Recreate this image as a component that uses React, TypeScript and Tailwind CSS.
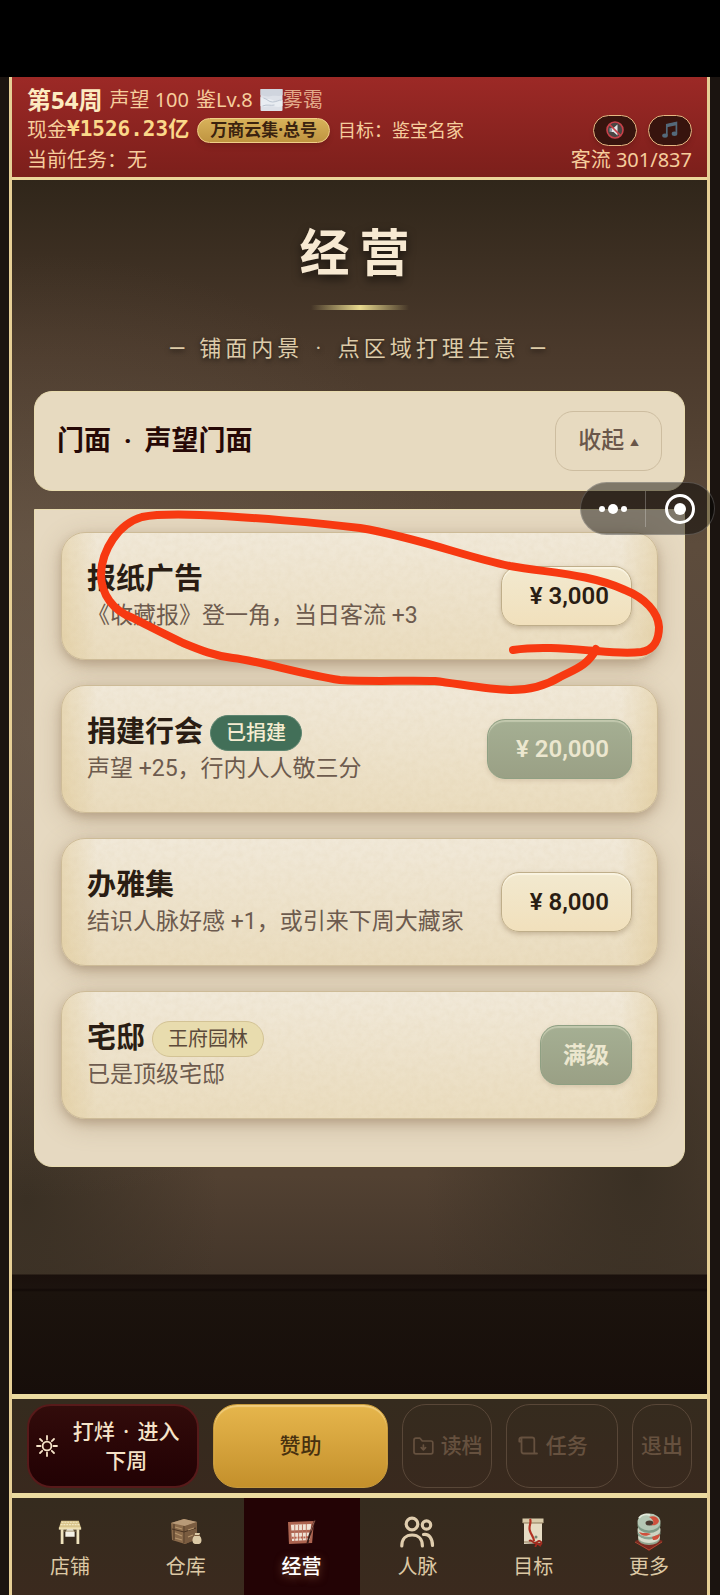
import React from 'react';

type Deal = {
  name: string;
  desc: string;
  badge?: string;
  badgeStyle?: string;
  price?: string;
  disabled?: boolean;
};

const deals: Deal[] = [
  { name: "报纸广告", desc: "《收藏报》登一角，当日客流 +3", price: "¥ 3,000" },
  {
    name: "捐建行会",
    desc: "声望 +25，行内人人敬三分",
    badge: "已捐建",
    badgeStyle: "border-[#5d8570] bg-[#426f58] text-[#f5ecd0] font-medium",
    price: "¥ 20,000",
    disabled: true,
  },
  { name: "办雅集", desc: "结识人脉好感 +1，或引来下周大藏家", price: "¥ 8,000" },
  {
    name: "宅邸",
    desc: "已是顶级宅邸",
    badge: "王府园林",
    badgeStyle: "border-[#d3c395] bg-[#e8dcae] text-[#5c4a3a]",
    disabled: true,
  },
];

const FogIcon = () => (
  <svg viewBox="0 0 22 22" className="h-[22px] w-[23px] shrink-0" aria-hidden="true">
    <rect width="22" height="22" rx="1" fill="#dde1e8" />
    <path d="M0 0h22v6c-4 2-7 0-11 1S4 7 0 6z" fill="#d0d5de" />
    <path d="M0 8c5 3 8 1 12 3s6 1 10 0v6c-5 2-8 0-12 0s-6 2-10 0z" fill="#e9edf2" />
    <path d="M3 9c4 1 5 4 9 4s6-2 9-2M2 17c5-2 8 0 12-1" stroke="#bcc5d1" strokeWidth="1" fill="none" />
  </svg>
);

const MuteIcon = () => (
  <svg viewBox="0 0 20 20" className="h-5 w-5" aria-hidden="true">
    <circle cx="10" cy="10" r="8" fill="#4a4644" />
    <path d="M6 8h2.500l4-3.500v11l-4-3.500H6z" fill="#e6e8ea" />
    <path d="M4.500 8.200h2.500v3.600H4.500z" fill="#8d99a3" />
    <circle cx="10" cy="10" r="8" fill="none" stroke="#c9414a" strokeWidth="1.6" />
    <path d="M4.400 4.400l11.200 11.200" stroke="#c9414a" strokeWidth="1.6" />
  </svg>
);

const MusicIcon = () => (
  <svg viewBox="0 0 20 20" className="h-5 w-5" aria-hidden="true">
    <path d="M6.800 15V4.600l9.600-2v10.600" fill="none" stroke="#54697a" strokeWidth="1.7" />
    <path d="M6.800 4.200l9.600-2v3l-9.600 2z" fill="#54697a" />
    <ellipse cx="5" cy="15.600" rx="2.800" ry="2.200" fill="#54697a" />
    <ellipse cx="14.500" cy="13.800" rx="2.800" ry="2.200" fill="#54697a" />
  </svg>
);

const SunIcon = () => (
  <svg viewBox="0 0 24 24" className="h-6 w-6 shrink-0" fill="none" stroke="currentColor" strokeWidth="1.8" strokeLinecap="round" aria-hidden="true">
    <circle cx="12" cy="12" r="4.400" />
    <path d="M12 2v3.500M12 18.500v3.500M2 12h3.500M18.500 12h3.500M5 5l2.200 2.200M16.800 16.800l2.200 2.200M5 19l2.200-2.200M16.800 7.200l2.200-2.200" />
  </svg>
);

const FolderIcon = () => (
  <svg viewBox="0 0 24 24" className="h-6 w-6 shrink-0" fill="none" stroke="currentColor" strokeWidth="1.7" strokeLinecap="round" strokeLinejoin="round" aria-hidden="true">
    <path d="M3 6.200C3 5 3.800 4.200 5 4.200h4l2.300 2.800H20c1.100 0 1.800.8 1.800 1.800V18c0 1.100-.8 1.800-1.800 1.800H5c-1.200 0-2-.8-2-1.800z" />
    <path d="M12.400 11v4.500M10.200 13.700l2.200 2.200 2.200-2.200" />
  </svg>
);

const ScrollIcon = () => (
  <svg viewBox="0 0 24 24" className="h-6 w-6 shrink-0" fill="none" stroke="currentColor" strokeWidth="1.8" strokeLinecap="round" strokeLinejoin="round" aria-hidden="true">
    <path d="M5.500 7.500H3.300V5.500C3.300 4.200 4.300 3.500 5.500 3.500H16c1.400 0 2.300.9 2.300 2.300V19.500h2.700M5.500 4v13.300c0 1.400.9 2.200 2.200 2.200h11" />
  </svg>
);

const ShopIcon = () => (
  <svg viewBox="0 0 28 28" className="h-[26px] w-[26px]" aria-hidden="true">
    <path d="M4.500 2h19l2.500 8H2z" fill="#d9c58c" />
    <path d="M5 3.500h18M4 6h20" stroke="#f3e8c2" strokeWidth="1.200" strokeDasharray="2 1" />
    <path d="M2 9h24v2.500H2z" fill="#efe1b4" />
    <path d="M4 11h3v16H4zM21 11h3v16h-3z" fill="#efe3bd" />
    <path d="M11 11h6l2 3v5H9v-5z" fill="#f4f1e6" />
    <path d="M7 13h14" stroke="#94815a" strokeWidth="1" />
  </svg>
);

const StoreIcon = () => (
  <svg viewBox="0 0 34 28" className="h-7 w-[34px]" aria-hidden="true">
    <path d="M2 5l13-4 13 3v17l-12 5-13-4z" fill="#8a6a4a" />
    <path d="M2 5l13-4 13 3-12 4z" fill="#b89a78" />
    <path d="M16 8l12-4v17l-12 5z" fill="#7a5c40" />
    <path d="M3 11l12 3 12-4M5 6v16M15 8v17" stroke="#4a3422" strokeWidth="1" fill="none" />
    <path d="M6 9l7 2M6 15l7 3M6 20l7 2M19 12l6-2M19 19l5-2" stroke="#b6956d" strokeWidth="1.300" />
    <path d="M26 15h5l-.8 2.500c3 2 3.300 8-.2 8.500h-4c-3.500-.5-3.200-6.500-.2-8.500z" fill="#dccaa6" />
    <path d="M25.500 17.500h5.500" stroke="#7a5a3c" strokeWidth="1" />
  </svg>
);

const AbacusIcon = () => (
  <svg viewBox="0 0 32 28" className="h-[27px] w-[31px]" aria-hidden="true">
    <path d="M2 3l27-1-2 23-24 1z" fill="#ac6450" />
    <path d="M5 6l21-.8-.5 6-20 .6zM5.500 14.500l20-.6-.8 8-18.500.8z" fill="#efe3d6" />
    <path d="M9 6v17M13 6v17M17 5.500v17M21 5.200v17" stroke="#b97260" strokeWidth="1" />
    <path d="M6 19.500l18.500-.6" stroke="#b4604c" strokeWidth="2" strokeDasharray="2 1" />
    <path d="M30 1l-6 17-2 8" stroke="#3a1d18" strokeWidth="2" fill="none" />
    <path d="M29.500 2l-4 11" stroke="#9b6152" strokeWidth="1" />
  </svg>
);

const PeopleIcon = () => (
  <svg viewBox="0 0 36 34" className="h-[34px] w-9" fill="none" stroke="#e0cdae" strokeWidth="3.200" strokeLinecap="round" aria-hidden="true">
    <circle cx="13" cy="9" r="5.800" />
    <path d="M2.800 31c0-7 4.200-11 10.300-11s10.300 4 10.300 11" />
    <circle cx="27.500" cy="10" r="4.200" />
    <path d="M24.500 19.500c5.500-1 9 4 9 11" />
  </svg>
);

const GoalIcon = () => (
  <svg viewBox="0 0 24 30" className="h-[30px] w-6" aria-hidden="true">
    <path d="M3 2.500l18-.5v24l-18 1z" fill="#e6dcc4" />
    <path d="M1.500 1.500h21V6h-21z" fill="#d8caa9" />
    <path d="M2 6h20M3 25h18" stroke="#8d7958" strokeWidth="1" />
    <path d="M9 2c2 4-2 7 0 12 1 4 4 6 4 10" stroke="#b23224" strokeWidth="2.200" fill="none" />
    <circle cx="15" cy="20" r="1.500" fill="#758774" />
    <path d="M8 24c3-2 4 2 6 2s4-4 6-1-3 3-5 1c1 2 0 3-1 4M15 26l5 3" stroke="#a12a1e" strokeWidth="1.800" fill="none" />
  </svg>
);

const MoreIcon = () => (
  <svg viewBox="0 0 30 40" className="h-10 w-[30px]" aria-hidden="true">
    <path d="M1 29l14-5 14 5-14 10z" fill="#7d2a20" />
    <path d="M1 30l14 8 13-8" stroke="#b54532" strokeWidth="1" fill="none" />
    <ellipse cx="15" cy="27" rx="11" ry="6" fill="#93a58f" />
    <ellipse cx="15" cy="25" rx="11" ry="6" fill="#d8dccb" />
    <ellipse cx="15" cy="21" rx="11.500" ry="6.500" fill="#8aa390" />
    <ellipse cx="15" cy="18" rx="11.500" ry="7" fill="#cdd4c2" />
    <ellipse cx="15" cy="13" rx="11.500" ry="8" fill="#7f9985" />
    <ellipse cx="15" cy="10" rx="11.500" ry="8.500" fill="#b5c7b4" />
    <ellipse cx="15.500" cy="11" rx="4" ry="2.500" fill="#4a3a30" />
    <path d="M15 5c5-2 9 0 10 4-1 4-5 5-8 4 4-1 3-5-2-8zM5 20c5 2 8 0 12 2-5 3-10 2-12-2zM18 25l8-3c-1 5-3 6-7 6z" fill="#cf503c" />
    <path d="M5 6c3-4 8-4 11-3" stroke="#e4eadb" strokeWidth="2" fill="none" />
  </svg>
);

const tabs = [
  { label: "店铺", icon: <ShopIcon /> },
  { label: "仓库", icon: <StoreIcon /> },
  { label: "经营", icon: <AbacusIcon />, active: true },
  { label: "人脉", icon: <PeopleIcon /> },
  { label: "目标", icon: <GoalIcon /> },
  { label: "更多", icon: <MoreIcon /> },
];

const PaperGrain = () => (
  <svg className="pointer-events-none absolute inset-0 h-full w-full rounded-3xl opacity-10" aria-hidden="true">
    <filter id="grain">
      <feTurbulence type="fractalNoise" baseFrequency="0.16" numOctaves="4" seed="4" />
      <feColorMatrix values="0 0 0 0 0.62  0 0 0 0 0.48  0 0 0 0 0.26  0 1.6 0 0 -0.5" />
    </filter>
    <rect width="100%" height="100%" filter="url(#grain)" />
  </svg>
);

const Header = () => (
  <header className="flex items-end justify-between border-b-[3px] border-[#ecd69b] bg-linear-to-b from-[#9c2926] to-[#7c1f1b] px-[15px] pt-2 pb-[2px] text-xl text-[#f6cd9c]">
    <div>
      <div className="flex h-[30px] items-center gap-[7px]">
        <span className="text-2xl font-bold text-[#fdebc0]">第54周</span>
        <span>声望 100</span>
        <span>鉴Lv.8</span>
        <span className="flex items-center text-[#e3aa8a]"><FogIcon />雾霭</span>
      </div>
      <div className="flex h-[30px] items-center gap-2">
        <span className="flex items-center">
          现金
          <b className="font-['DejaVu_Sans_Mono','Noto_Sans_CJK_SC',monospace] text-[21px] text-[#fbd88a]">¥1526.23亿</b>
        </span>
        <span className="flex h-[25px] items-center rounded-full border border-[#f1cf87] bg-linear-to-b from-[#d8b25a] to-[#bf9440] px-3 text-[17px] font-bold text-[#3b230f] shadow-md">
          万商云集·总号
        </span>
        <span className="text-lg">目标：鉴宝名家</span>
      </div>
      <div className="flex h-[30px] items-center">当前任务：无</div>
    </div>
    <div>
      <div className="flex h-[30px] items-center justify-end gap-[11px]">
        <button aria-label="静音" className="flex h-[31px] w-11 items-center justify-center rounded-full border border-[#e5b782] bg-[#37140e] shadow-md"><MuteIcon /></button>
        <button aria-label="音乐" className="flex h-[31px] w-11 items-center justify-center rounded-full border border-[#e5b782] bg-[#37140e] shadow-md"><MusicIcon /></button>
      </div>
      <div className="flex h-[30px] items-center">客流 301/837</div>
    </div>
  </header>
);

const DealCard = ({ deal }: { deal: Deal }) => (
  <li className="relative flex items-center justify-between rounded-3xl border border-[#cdbb97] bg-[linear-gradient(to_right,#dcc28866_0,transparent_6%,transparent_94%,#dcc28866_100%),linear-gradient(to_bottom,#f1e9d9,#eadcbe)] px-[25px] py-[25px] shadow-[0_4px_8px_#8a705055,0_6px_26px_#8a705055]">
    <PaperGrain />
    <div className="relative pt-1">
      <div className="flex h-9 items-center gap-[7px]">
        <h3 className="text-[29px] font-bold text-[#2a1d13]">{deal.name}</h3>
        {deal.badge && (
          <span className={`flex h-9 items-center rounded-full border px-[15px] text-xl ${deal.badgeStyle}`}>{deal.badge}</span>
        )}
      </div>
      <p className="h-9 text-[23px] leading-9 text-[#6d5b4e]">{deal.desc}</p>
    </div>
    <button
      disabled={deal.disabled}
      className={
        deal.disabled
          ? "relative h-[60px] rounded-[18px] border border-[#8fa083] bg-linear-to-b from-[#a5af93] to-[#9aa085] px-[22px] text-2xl font-semibold text-[#ece7cf] shadow-[inset_0_2px_1px_#c3c9ae,0_2px_4px_#8a705033]"
          : "relative h-[60px] rounded-[18px] border border-[#bfae8a] bg-linear-to-b from-[#f2e9cf] to-[#f1e0bc] px-[22px] text-2xl font-semibold text-[#2a1d13] shadow-[inset_0_2px_1px_#faf4e2,0_2px_5px_#8a705066]"
      }
    >
      {deal.price ? <span className="ml-[6px]">{deal.price}</span> : <span className="text-[23px]">满级</span>}
    </button>
  </li>
);

const ActionBar = () => (
  <div className="grid grid-cols-[172fr_174fr_90fr_112fr_60fr] gap-[14px] border-t-[5px] border-[#ecdba0] bg-linear-to-b from-[#352b1e] to-[#39291e] px-[15px] py-[5px] text-[21px] font-medium">
    <button className="flex h-[84px] items-center rounded-3xl border-2 border-[#571a1a] bg-linear-to-b from-[#320c0b] to-[#220204] pr-1 pl-[6px] text-[#f6e3c8]">
      <SunIcon />
      <span className="flex-1 leading-[29px]">打烊<span className="mx-[3px]"> · </span>进入<br />下周</span>
    </button>
    <button className="h-[84px] rounded-3xl border border-[#c79a3c] bg-linear-to-b from-[#e6b64c] to-[#c4902b] text-[#47300f] shadow-[inset_0_2px_1px_#f0cd7d]">
      赞助
    </button>
    <button disabled className="flex h-[84px] items-center justify-center gap-[6px] rounded-3xl border border-[#594738] text-[#66513f]">
      <FolderIcon />读档
    </button>
    <button disabled className="flex h-[84px] items-center gap-[6px] rounded-3xl border border-[#594738] pl-[9px] text-[#66513f]">
      <ScrollIcon />任务
    </button>
    <button disabled className="h-[84px] rounded-3xl border border-[#594738] text-[#66513f]">退出</button>
  </div>
);

const TabBar = () => (
  <nav className="grid grid-cols-6 border-t-[5px] border-[#ecdba0] bg-linear-to-b from-[#352b1e] to-[#3b2a1e]">
    {tabs.map((tab) => (
      <a
        key={tab.label}
        href="#"
        className={
          tab.active
            ? "flex h-[97px] flex-col items-center bg-[#230305] pt-[14px] text-xl font-medium text-white [text-shadow:0_2px_8px_#c98a5a88]"
            : "flex h-[97px] flex-col items-center pt-[14px] text-xl text-[#dcc8a4]"
        }
      >
        <span className="flex h-10 items-center justify-center">{tab.icon}</span>
        <span className="leading-[30px]">{tab.label}</span>
      </a>
    ))}
  </nav>
);

// mini program menu that floats above the page
const Capsule = () => (
  <div className="absolute top-[482px] right-[5px] flex h-[53px] w-[135px] items-center rounded-full border border-white/20 bg-black/45">
    <button aria-label="菜单" className="flex flex-1 items-center justify-center gap-[3px]">
      <i className="h-[6px] w-[6px] rounded-full bg-white" />
      <i className="h-[10px] w-[10px] rounded-full bg-white" />
      <i className="h-[6px] w-[6px] rounded-full bg-white" />
    </button>
    <span className="h-9 w-px bg-white/25" />
    <button aria-label="关闭" className="flex w-[68px] items-center justify-center">
      <span className="flex h-[30px] w-[30px] items-center justify-center rounded-full border-[3px] border-white">
        <i className="h-3 w-3 rounded-full bg-white" />
      </span>
    </button>
  </div>
);

const MarkerStroke = () => (
  <svg viewBox="0 0 720 220" className="pointer-events-none absolute top-[490px] left-0 h-[220px] w-[720px]" fill="none" stroke="#f73911" strokeWidth="8" strokeLinecap="round" strokeLinejoin="round" aria-hidden="true">
    <path d="M513 160C540 156 570 159 597 161C618 163 632 163 641 162C655 160 659 148 659 137C658 122 645 108 625 100C590 84 550 83 510 76C465 67 420 48 360 38C320 33 250 27 200 25C170 24 152 25 142 27C118 34 102 60 101 84C101 104 113 121 133 128C148 136 165 144 183 153C200 160 215 166 233 168C260 171 300 184 340 190C375 192 405 190 435 191C460 194 490 200 511 200C530 200 545 196 560 187C573 180 588 176 596 159" />
  </svg>
);

const App = () => {
  return (
    <div className="relative flex min-h-screen flex-col overflow-x-hidden bg-[#1b1410] font-['Noto_Sans','Noto_Sans_CJK_SC',sans-serif]">
      <div className="h-[77px] bg-black" />
      <div className="mr-[10px] ml-[9px] flex flex-1 flex-col border-x-[3px] border-[#e6cf96]">
        <Header />

        <main className="flex-1 bg-[linear-gradient(to_top,#170e0a_0,#1b130d_102px,#120a07_104px,#1c130e_106px,#1a100c_119px,transparent_120px),radial-gradient(ellipse_at_5%_45%,#75655488_0,transparent_50%),radial-gradient(ellipse_at_90%_82%,#3a3024_0,transparent_24%),radial-gradient(ellipse_at_2%_84%,#3a3024_0,transparent_20%),linear-gradient(to_bottom,#30261a_0,#4a392b_14%,#5d4c3c_30%,#54443a_60%,#524132_82%,#44362a_90%)] px-[22px] pt-11 pb-[226px] font-[Roboto,'Noto_Sans_CJK_SC',sans-serif]">
          <h1 className="text-center text-[50px] leading-[60px] font-bold tracking-[10px] text-[#f7e9d2] [text-shadow:0_4px_10px_#0009]">经营</h1>
          <div className="mx-auto mt-[21px] h-[5px] w-[98px] bg-linear-to-r from-transparent via-[#e8d98e] to-transparent" />
          <p className="mt-[23px] text-center text-[22px] leading-8 tracking-[4px] text-[#ddcba9] [text-shadow:0_2px_5px_#0009]">
            — 铺面内景<span className="mx-[3px]"> · </span>点区域打理生意 —
          </p>

          <section className="mt-[26px] flex items-center justify-between rounded-[18px] border border-[#e9dcb0] bg-[#e7dac0] py-[19px] pr-[22px] pl-[22px]">
            <h2 className="text-[27px] font-bold text-[#260806]">门面<span className="mx-[6px]"> · </span>声望门面</h2>
            <button className="h-[60px] rounded-[18px] border border-[#cdbda0] px-[22px] text-[23px] font-medium text-[#6a574a]">
              收起 <span className="align-[2px] text-[9px]">▲</span>
            </button>
          </section>

          <ul className="mt-[18px] flex flex-col gap-[25px] rounded-b-[18px] border border-[#e9dcb0] bg-[#e6d9c1] px-[26px] pt-[22px] pb-[47px]">
            {deals.map((deal) => (
              <DealCard key={deal.name} deal={deal} />
            ))}
          </ul>
        </main>

        <ActionBar />
        <TabBar />
      </div>

      <MarkerStroke />
      <Capsule />
    </div>
  );
};

export default App;
